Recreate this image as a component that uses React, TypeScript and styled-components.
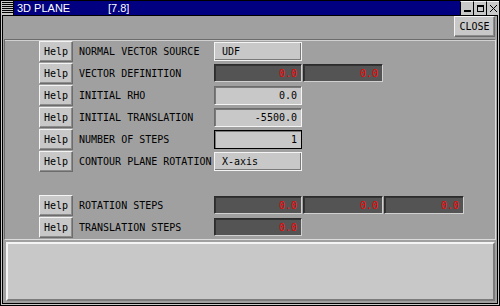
import React from "react";
import styled, {createGlobalStyle} from "styled-components";

const PANEL = "#a0a0a0";
const FACE = "#c8c8c8";
const DARK_FIELD = "#545454";
const SHADOW = "#6c6c6c";
const LIGHT = "#f4f4f4";
const MONO = `"DejaVu Sans Mono", "Liberation Mono", monospace`;

const GlobalStyle = createGlobalStyle`
  html, body {
    margin: 0;
    padding: 0;
    background: ${PANEL};
  }
  * {
    box-sizing: border-box;
  }
`;

const Window = styled.div({
  width: 500,
  height: 306,
  display: "flex",
  flexDirection: "column",
  border: "1px solid #000",
  backgroundColor: PANEL,
  overflow: "hidden",
});

const TitleBar = styled.div({
  height: 14,
  display: "flex",
  alignItems: "center",
  backgroundColor: "#000080",
  color: "white",
  fontFamily: `"Liberation Sans", Arial, sans-serif`,
  fontSize: 11,
});

const MenuBox = styled.div({
  width: 13,
  height: 14,
  backgroundColor: FACE,
  borderRight: "1px solid #000",
  display: "flex",
  alignItems: "center",
  justifyContent: "center",
});

const TitleName = styled.span({
  width: 91,
  marginLeft: 3,
});

const TitleTag = styled.span({
  flex: 1,
});

const WinButton = styled.div({
  width: 13,
  height: 14,
  backgroundColor: FACE,
  borderLeft: "1px solid #000",
  borderTop: `1px solid ${LIGHT}`,
  display: "flex",
  alignItems: "center",
  justifyContent: "center",
});

const Frame = styled.div({
  flex: 1,
  display: "flex",
  flexDirection: "column",
  borderLeft: `1px solid ${FACE}`,
  borderRight: `1px solid ${FACE}`,
  borderBottom: `1px solid ${FACE}`,
});

const Content = styled.div({
  flex: 1,
  display: "flex",
  flexDirection: "column",
  border: "1px solid #000",
  backgroundColor: PANEL,
});

const Toolbar = styled.div({
  height: 23,
  display: "flex",
  justifyContent: "flex-end",
  alignItems: "flex-start",
  padding: "0 2px 0 0",
});

const Bevel = styled.button<{$w: number; $h: number}>`
  width: ${(p) => p.$w}px;
  height: ${(p) => p.$h}px;
  padding: 0;
  margin: 0;
  background: ${FACE};
  color: #000;
  font-family: ${MONO};
  font-size: 10px;
  border: 1px solid;
  border-color: ${LIGHT} ${SHADOW} ${SHADOW} ${LIGHT};
  box-shadow: inset -1px -1px 0 #8c8c8c;
  display: flex;
  align-items: center;
  justify-content: center;
  cursor: pointer;
`;

const MainPanel = styled.div({
  height: 201,
  margin: "0 1px",
  borderTop: `1px solid ${SHADOW}`,
  borderLeft: `1px solid ${SHADOW}`,
  borderRight: `1px solid #dcdcdc`,
  borderBottom: `1px solid #dcdcdc`,
  boxShadow: `inset 0 1px 0 #d0d0d0`,
  display: "flex",
  flexDirection: "column",
});

const Row = styled.div({
  height: 22,
  display: "grid",
  gridTemplateColumns: "34px 141px auto",
  alignItems: "center",
  paddingLeft: 34,
});

const Spacer = styled.div({
  height: 22,
});

const HelpButton = styled(Bevel)`
  align-self: start;
  margin-top: 1px;
`;

const Label = styled.div({
  fontFamily: MONO,
  fontSize: 10,
  color: "#000",
  paddingLeft: 6,
  whiteSpace: "nowrap",
});

const Fields = styled.div({
  display: "flex",
  gap: 1,
});

const Field = styled.div<{$kind: "choice" | "number" | "focus" | "dark"; $w?: number}>`
  width: ${(p) => p.$w ?? 88}px;
  height: ${(p) => (p.$kind === "dark" ? 18 : 19)}px;
  font-family: ${MONO};
  font-size: 10px;
  display: flex;
  align-items: center;
  white-space: nowrap;
  background: ${(p) => (p.$kind === "dark" ? DARK_FIELD : FACE)};
  color: ${(p) => (p.$kind === "dark" ? "#ff0000" : "#000")};
  justify-content: ${(p) => (p.$kind === "choice" ? "flex-start" : "flex-end")};
  padding: ${(p) => (p.$kind === "choice" ? "0 0 0 7px" : "0 4px 0 0")};
  border: 1px solid;
  border-color: ${(p) =>
    p.$kind === "choice"
      ? LIGHT
      : p.$kind === "focus"
      ? "#000"
      : p.$kind === "dark"
      ? `#2c2c2c #d0d0d0 #d0d0d0 #2c2c2c`
      : `${SHADOW} ${LIGHT} ${LIGHT} ${SHADOW}`};
  box-shadow: ${(p) =>
    p.$kind === "choice"
      ? `inset -1px -1px 0 #7a7a7a`
      : p.$kind === "dark"
      ? `inset 1px 1px 0 #333`
      : `inset 1px 1px 0 #7a7a7a`};
`;

const BottomPanel = styled.div({
  flex: 1,
  margin: "2px 2px 2px 3px",
  backgroundColor: FACE,
  borderTop: `2px solid ${LIGHT}`,
  borderLeft: `2px solid ${LIGHT}`,
  borderRight: `2px solid #7c7c7c`,
  borderBottom: `2px solid #7c7c7c`,
});

function MenuIcon() {
  return (
    <svg width="11" height="12" viewBox="0 0 11 12">
      {[1, 3, 5, 7, 9, 11].map((y) => (
        <rect key={y} x="0" y={y - 1} width="11" height="1" fill="#000" />
      ))}
    </svg>
  );
}

function MinIcon() {
  return (
    <svg width="9" height="9" viewBox="0 0 9 9">
      <rect x="1" y="6" width="7" height="2" fill="#000" />
    </svg>
  );
}

function MaxIcon() {
  return (
    <svg width="9" height="9" viewBox="0 0 9 9">
      <rect x="1.5" y="1.5" width="6" height="6" fill="none" stroke="#000" strokeWidth="1" />
      <rect x="1" y="1" width="7" height="2" fill="#000" />
    </svg>
  );
}

function XIcon() {
  return (
    <svg width="9" height="9" viewBox="0 0 9 9">
      <path d="M1 1 L8 8 M8 1 L1 8" stroke="#000" strokeWidth="1" />
    </svg>
  );
}

type FieldSpec = {kind: "choice" | "number" | "focus" | "dark"; value: string; w?: number};

const rows: {label: string; fields: FieldSpec[]}[] = [
  {label: "NORMAL VECTOR SOURCE", fields: [{kind: "choice", value: "UDF"}]},
  {
    label: "VECTOR DEFINITION",
    fields: [
      {kind: "dark", value: "0.0"},
      {kind: "dark", value: "0.0", w: 80},
    ],
  },
  {label: "INITIAL RHO", fields: [{kind: "number", value: "0.0"}]},
  {label: "INITIAL TRANSLATION", fields: [{kind: "number", value: "-5500.0"}]},
  {label: "NUMBER OF STEPS", fields: [{kind: "focus", value: "1"}]},
  {label: "CONTOUR PLANE ROTATION", fields: [{kind: "choice", value: "X-axis"}]},
];

const lowerRows: {label: string; fields: FieldSpec[]}[] = [
  {
    label: "ROTATION STEPS",
    fields: [
      {kind: "dark", value: "0.0"},
      {kind: "dark", value: "0.0", w: 80},
      {kind: "dark", value: "0.0", w: 80},
    ],
  },
  {label: "TRANSLATION STEPS", fields: [{kind: "dark", value: "0.0"}]},
];

function ParamRow({label, fields}: {label: string; fields: FieldSpec[]}) {
  return (
    <Row>
      <HelpButton $w={34} $h={21}>Help</HelpButton>
      <Label>{label}</Label>
      <Fields>
        {fields.map((f, i) => (
          <Field key={i} $kind={f.kind} $w={f.w}>
            {f.value}
          </Field>
        ))}
      </Fields>
    </Row>
  );
}

export default function App() {
  return (
    <>
      <GlobalStyle />
      <Window>
        <TitleBar>
          <MenuBox>
            <MenuIcon />
          </MenuBox>
          <TitleName>3D PLANE</TitleName>
          <TitleTag>[7.8]</TitleTag>
          <WinButton>
            <MinIcon />
          </WinButton>
          <WinButton>
            <MaxIcon />
          </WinButton>
          <WinButton>
            <XIcon />
          </WinButton>
        </TitleBar>
        <Frame>
          <Content>
            <Toolbar>
              <Bevel $w={41} $h={21}>CLOSE</Bevel>
            </Toolbar>
            <MainPanel>
              {rows.map((r) => (
                <ParamRow key={r.label} {...r} />
              ))}
              <Spacer />
              {lowerRows.map((r) => (
                <ParamRow key={r.label} {...r} />
              ))}
            </MainPanel>
            <BottomPanel />
          </Content>
        </Frame>
      </Window>
    </>
  );
}
